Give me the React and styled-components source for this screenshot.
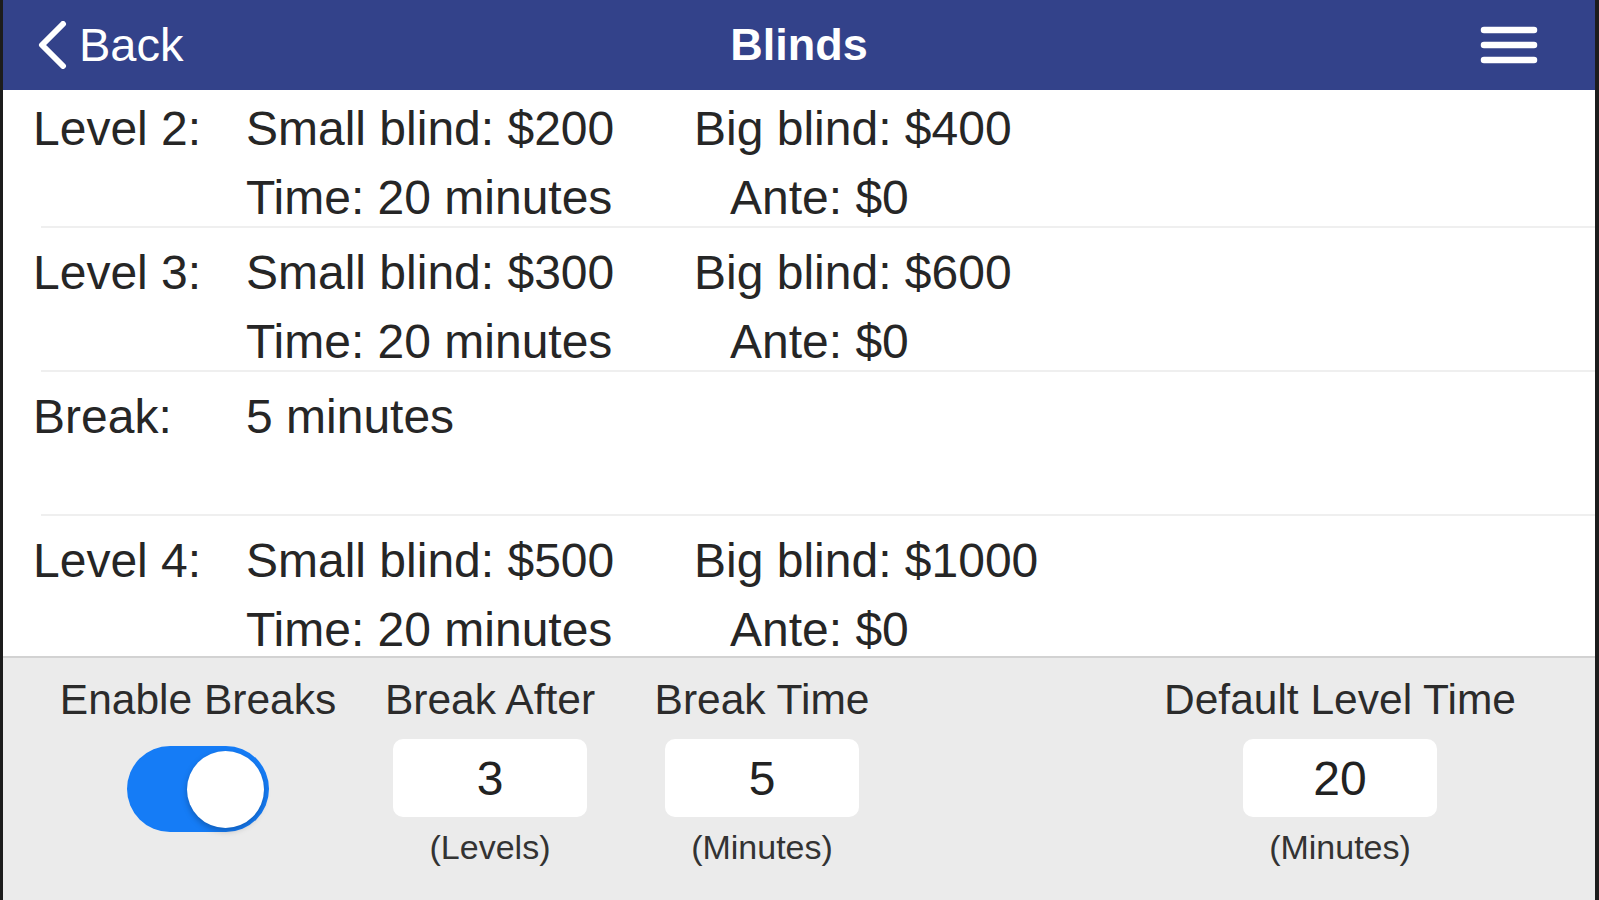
import React from "react";
import styled, { createGlobalStyle } from "styled-components";

const GlobalStyle = createGlobalStyle`
  html, body {
    margin: 0;
    padding: 0;
    height: 100%;
    background: #1c1c1c;
  }
  #root {
    height: 100%;
  }
  * {
    box-sizing: border-box;
  }
`;

const Screen = styled.div`
  height: 100vh;
  margin: 0 4px 0 3px;
  display: flex;
  flex-direction: column;
  background: #ffffff;
  font-family: "Liberation Sans", Arial, sans-serif;
  overflow: hidden;
`;

const NavBar = styled.header`
  height: 90px;
  flex: 0 0 90px;
  background: #33428a;
  color: #ffffff;
  display: grid;
  grid-template-columns: 1fr auto 1fr;
  align-items: center;
  padding: 0 45px;
`;

const BackButton = styled.div`
  margin-left: -11px;
  display: flex;
  align-items: center;
  gap: 12px;
  font-size: 47px;
  line-height: 46px;
`;

const Title = styled.h1`
  margin: 0;
  font-size: 45px;
  line-height: 46px;
  font-weight: 700;
`;

const MenuButton = styled.div`
  justify-self: end;
  margin-right: 12px;
  display: flex;
  align-items: center;
`;

const LevelList = styled.div`
  flex: 1;
  overflow: hidden;
`;

const ListInner = styled.div`
  margin-top: -6px;
  padding-left: 38px;
`;

const Row = styled.div`
  height: 144px;
  padding-top: 20px;
  border-bottom: 2px solid #efefef;
  display: grid;
  grid-template-columns: 205px 448px 1fr;
  grid-auto-rows: 50px;
  row-gap: 19px;
  font-size: 48px;
  line-height: 50px;
  color: #262626;
`;

const Label = styled.span`
  margin-left: -8px;
`;

const Cell = styled.span`
  grid-column: ${({ col }) => col};
  padding-left: ${({ indent }) => indent || 0}px;
  white-space: nowrap;
`;

const SettingsPanel = styled.div`
  flex: 0 0 244px;
  background: #ebebeb;
  border-top: 2px solid #d2d2d2;
  display: flex;
  gap: 42px;
  padding: 18px 65px 0 60px;
`;

const Setting = styled.div`
  width: ${({ width }) => width}px;
  margin-left: ${({ pushRight }) => (pushRight ? "auto" : "0")};
  display: flex;
  flex-direction: column;
  align-items: center;
  color: #2b2b2b;
`;

const SettingLabel = styled.div`
  font-size: 42.5px;
  line-height: 48px;
  white-space: nowrap;
`;

const ValueBox = styled.div`
  margin-top: 15px;
  width: 194px;
  height: 78px;
  border-radius: 10px;
  background: #ffffff;
  display: flex;
  align-items: center;
  justify-content: center;
  font-size: 48px;
  color: #222222;
`;

const Unit = styled.div`
  margin-top: 10px;
  font-size: 34px;
  line-height: 40px;
  color: #333333;
`;

const Toggle = styled.div`
  margin-top: 22px;
  width: 142px;
  height: 86px;
  border-radius: 43px;
  background: ${({ on }) => (on ? "#157cf6" : "#d6d6d6")};
  display: flex;
  align-items: center;
  justify-content: ${({ on }) => (on ? "flex-end" : "flex-start")};
  padding: 0 5px;
`;

const Knob = styled.div`
  width: 77px;
  height: 77px;
  border-radius: 50%;
  background: #ffffff;
  box-shadow: 0 3px 6px rgba(0, 0, 0, 0.25);
`;

const levels = [
  { label: "Level 2:", small: "$200", big: "$400", time: 20, ante: "$0" },
  { label: "Level 3:", small: "$300", big: "$600", time: 20, ante: "$0" },
  { label: "Break:", minutes: 5 },
  { label: "Level 4:", small: "$500", big: "$1000", time: 20, ante: "$0" },
];

const settings = [
  { label: "Enable Breaks", width: 270, toggle: true },
  { label: "Break After", width: 230, value: "3", unit: "(Levels)" },
  { label: "Break Time", width: 230, value: "5", unit: "(Minutes)" },
  { label: "Default Level Time", width: 380, value: "20", unit: "(Minutes)", pushRight: true },
];

const App = () => {
  return (
    <>
      <GlobalStyle />
      <Screen>
        <NavBar>
          <BackButton>
            <svg width="30" height="48" viewBox="0 0 30 48">
              <polyline
                points="26,3 5,24 26,45"
                fill="none"
                stroke="#ffffff"
                strokeWidth="6"
                strokeLinecap="round"
                strokeLinejoin="round"
              />
            </svg>
            <span>Back</span>
          </BackButton>
          <Title>Blinds</Title>
          <MenuButton>
            <svg width="58" height="44" viewBox="0 0 58 44">
              {[7, 22, 37].map((y) => (
                <line
                  key={y}
                  x1="4"
                  x2="54"
                  y1={y}
                  y2={y}
                  stroke="#ffffff"
                  strokeWidth="6.5"
                  strokeLinecap="round"
                />
              ))}
            </svg>
          </MenuButton>
        </NavBar>

        <LevelList>
          <ListInner>
            {levels.map((level, index) => (
              <Row key={index}>
                <Label>{level.label}</Label>
                {level.minutes ? (
                  <Cell col={2}>{level.minutes} minutes</Cell>
                ) : (
                  <>
                    <Cell col={2}>Small blind: {level.small}</Cell>
                    <Cell col={3}>Big blind: {level.big}</Cell>
                    <Cell col={2}>Time: {level.time} minutes</Cell>
                    <Cell col={3} indent={36}>
                      Ante: {level.ante}
                    </Cell>
                  </>
                )}
              </Row>
            ))}
          </ListInner>
        </LevelList>

        <SettingsPanel>
          {settings.map((item) => (
            <Setting key={item.label} width={item.width} pushRight={item.pushRight}>
              <SettingLabel>{item.label}</SettingLabel>
              {item.toggle ? (
                <Toggle on>
                  <Knob />
                </Toggle>
              ) : (
                <>
                  <ValueBox>{item.value}</ValueBox>
                  <Unit>{item.unit}</Unit>
                </>
              )}
            </Setting>
          ))}
        </SettingsPanel>
      </Screen>
    </>
  );
};

export default App;
